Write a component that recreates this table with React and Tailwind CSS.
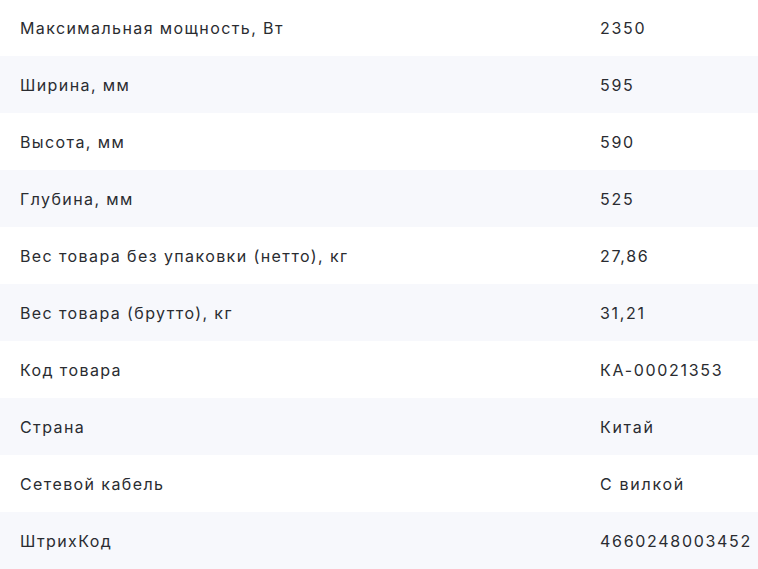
import React from 'react';

const specs = [
  ['Максимальная мощность, Вт', '2350'],
  ['Ширина, мм', '595'],
  ['Высота, мм', '590'],
  ['Глубина, мм', '525'],
  ['Вес товара без упаковки (нетто), кг', '27,86'],
  ['Вес товара (брутто), кг', '31,21'],
  ['Код товара', 'КА-00021353'],
  ['Страна', 'Китай'],
  ['Сетевой кабель', 'С вилкой'],
  ['ШтрихКод', '4660248003452'],
];

const App = () => {
  return (
    <div className="w-[758px] bg-white font-['Inter',sans-serif] text-base tracking-[1.4px] text-[#2a2c31]">
      {specs.map(([label, value], i) => (
        <div
          key={label}
          className={`flex items-center ${i === 0 ? 'h-[56px]' : 'h-[57px]'} ${i % 2 === 1 ? 'bg-[#f7f8fc]' : 'bg-white'}`}
        >
          <div className="w-[600px] pl-5">{label}</div>
          <div className="flex-1 tracking-[1.7px]">{value}</div>
        </div>
      ))}
    </div>
  );
};

export default App;
